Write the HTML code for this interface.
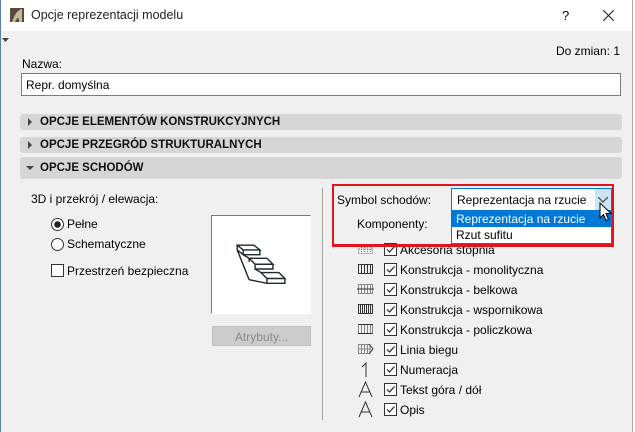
<!DOCTYPE html>
<html><head><meta charset="utf-8"><style>
*{box-sizing:border-box;margin:0;padding:0}
body{width:635px;height:432px;overflow:hidden;background:#f0f0f0;font-family:"Liberation Sans",sans-serif;font-size:12px;color:#000;position:relative}
.a{position:absolute;white-space:nowrap}
.bar{position:absolute;left:20px;width:602px;background:#d6d6d6;border-radius:3px;font-weight:bold;font-size:11.5px;color:#111}
.cb{position:absolute;width:13px;height:13px;border:1px solid #333;background:#fff}
</style></head><body>
<div class="a" style="left:0;top:0;width:635px;height:31px;background:#fff"></div>
<div class="a" style="left:0;top:0;width:1px;height:432px;background:#5b7fa8"></div>
<div class="a" style="left:632px;top:0;width:3px;height:432px;background:#fff;border-left:1px solid #aaa"></div>
<svg class="a" style="left:10px;top:8px" width="14" height="14"><rect width="14" height="14" fill="#5a4a3a"/><path d="M2 14 Q6 2 12 1 L12 14 L9 14 Q9 6 5 14Z" fill="#c8b89a"/></svg>
<div class="a" style="left:31px;top:8px;font-size:12.5px;color:#222">Opcje reprezentacji modelu</div>
<div class="a" style="left:562px;top:8px;font-size:13px">?</div>
<svg class="a" style="left:603px;top:10px" width="11" height="11"><path d="M0 0L11 11M11 0L0 11" stroke="#222" stroke-width="1.1"/></svg>
<svg class="a" style="left:2px;top:38px" width="7" height="5"><path d="M0 0H7L3.5 4Z" fill="#444"/></svg>
<div class="a" style="right:15px;top:44px">Do zmian: 1</div>
<div class="a" style="left:22px;top:57px">Nazwa:</div>
<div class="a" style="left:21px;top:73px;width:600px;height:23px;background:#fff;border:1px solid #7a7a7a;padding:4px 0 0 4px">Repr. domyślna</div>
<div class="bar" style="top:114px;height:16px;padding:2px 0 0 20px">OPCJE ELEMENTÓW KONSTRUKCYJNYCH</div>
<div class="bar" style="top:137px;height:16px;padding:2px 0 0 20px">OPCJE PRZEGRÓD STRUKTURALNYCH</div>
<div class="bar" style="top:157px;height:22px;padding:5px 0 0 20px">OPCJE SCHODÓW</div>
<svg class="a" style="left:28px;top:118px" width="5" height="8"><path d="M0 0L4 4L0 8Z" fill="#444"/></svg>
<svg class="a" style="left:28px;top:141px" width="5" height="8"><path d="M0 0L4 4L0 8Z" fill="#444"/></svg>
<svg class="a" style="left:26px;top:166px" width="8" height="5"><path d="M0 0H8L4 4Z" fill="#444"/></svg>
<div class="a" style="left:31px;top:192px">3D i przekrój / elewacja:</div>
<svg class="a" style="left:51px;top:218px" width="13" height="13"><circle cx="6.5" cy="6.5" r="6" fill="#fff" stroke="#333"/><circle cx="6.5" cy="6.5" r="3.3" fill="#222"/></svg>
<div class="a" style="left:67px;top:217px">Pełne</div>
<svg class="a" style="left:51px;top:238px" width="13" height="13"><circle cx="6.5" cy="6.5" r="6" fill="#fff" stroke="#333"/></svg>
<div class="a" style="left:67px;top:237px">Schematyczne</div>
<div class="cb" style="left:51px;top:264px"></div>
<div class="a" style="left:67px;top:264px">Przestrzeń bezpieczna</div>
<div class="a" style="left:211px;top:215px;width:100px;height:99px;background:#fff;border:1px solid #fff;border-top-color:#777;border-left-color:#777"></div>
<svg class="a" style="left:236px;top:244px" width="62" height="50" viewBox="0 0 52 42" fill="none" stroke="#1e2a30" stroke-width="1.2"><path d="M1 1H15L20 5H6Z M6 5V9H20V5 M1 1V5L6 9 M6 9L11 12H26L31 17H16L11 12 M16 17V21H31V17 M11 12V15 M1 5L11 30 M16 21L21 24H36L41 29H26L21 24 M26 29V33H41V29 M11 30L26 33"/></svg>
<div class="a" style="left:212px;top:326px;width:99px;height:20px;background:#cccccc;border:1px solid #bfbfbf;color:#8a8a8a;text-align:center;padding-top:3px">Atrybuty...</div>
<div class="a" style="left:322px;top:188px;width:1px;height:232px;background:#a0a0a0"></div>
<div class="a" style="left:337px;top:193px">Symbol schodów:</div>
<div class="a" style="left:357px;top:217px">Komponenty:</div>
<div class="a" style="left:451px;top:188px;width:161px;height:23px;background:#fff;border:1px solid #0078d7"></div>
<div class="a" style="left:457px;top:193px">Reprezentacja na rzucie</div>
<div class="a" style="left:595px;top:189px;width:16px;height:21px;background:#cce4f7"></div>
<svg class="a" style="left:598px;top:197px" width="10" height="6"><path d="M0 0L5 5L10 0" stroke="#333" fill="none"/></svg>
<div class="a" style="left:451px;top:210px;width:161px;height:34px;background:#fff;border:1px solid #0078d7"></div>
<div class="a" style="left:452px;top:211px;width:159px;height:16px;background:#0078d7;color:#fff;padding:1px 0 0 4px">Reprezentacja na rzucie</div>
<div class="a" style="left:456px;top:228px">Rzut sufitu</div>
<svg class="a" style="left:599px;top:202px" width="13" height="20"><path d="M1 1V16L4.5 12.5L7 18.5L9.5 17.5L7 11.5H12Z" fill="#fff" stroke="#000"/></svg>
<div class="a" style="left:332px;top:184px;width:282px;height:63px;border:2px solid #e0141e"></div>

<svg class="a" style="left:357px;top:242px" width="18" height="180" fill="none" stroke="#333" stroke-width="1">
<path d="M1.5 2.5H15.5V11.5H1.5Z M4.5 3V11M7.5 3V11M10.5 3V11M13.5 3V11M2 7H15" stroke="#777" stroke-dasharray="1 1"/>
<path d="M1.5 22.5H15.5V31.5H1.5Z M4.5 23V31M7.5 23V31M10.5 23V31M13.5 23V31"/>
<path d="M1.5 42.5H15.5V51.5H1.5Z M4.5 43V51M7.5 43V51M10.5 43V51M13.5 43V51" stroke="#888"/><path d="M0 47H17"/>
<path d="M1.5 62.5H15.5V71.5H1.5Z M3.5 63V71M5.5 63V71M7.5 63V71M9.5 63V71M11.5 63V71M13.5 63V71"/>
<path d="M1.5 82.5H15.5V91.5H1.5Z M4.5 83V91M7.5 83V91M10.5 83V91M13.5 83V91" stroke="#888"/><path d="M1 82.5H16M1 91.5H16"/>
<path d="M1.5 102.5H13V111.5H1.5Z M4.5 103V111M7.5 103V111M10.5 103V111 M1 107H14" stroke="#888"/><path d="M12 102L16 107L12 112"/>
<path d="M5 125L9 121V135"/>
<path d="M2 155L8.5 140L15 155M4.5 150H12.5"/>
<path d="M2 175L8.5 160L15 175M4.5 170H12.5"/>
</svg>
<div class="cb" style="left:384px;top:243px"></div><div class="a" style="left:400px;top:243px">Akcesoria stopnia</div>
<div class="cb" style="left:384px;top:263px"></div><div class="a" style="left:400px;top:263px">Konstrukcja - monolityczna</div>
<div class="cb" style="left:384px;top:283px"></div><div class="a" style="left:400px;top:283px">Konstrukcja - belkowa</div>
<div class="cb" style="left:384px;top:303px"></div><div class="a" style="left:400px;top:303px">Konstrukcja - wspornikowa</div>
<div class="cb" style="left:384px;top:323px"></div><div class="a" style="left:400px;top:323px">Konstrukcja - policzkowa</div>
<div class="cb" style="left:384px;top:343px"></div><div class="a" style="left:400px;top:343px">Linia biegu</div>
<div class="cb" style="left:384px;top:363px"></div><div class="a" style="left:400px;top:363px">Numeracja</div>
<div class="cb" style="left:384px;top:383px"></div><div class="a" style="left:400px;top:383px">Tekst góra / dół</div>
<div class="cb" style="left:384px;top:403px"></div><div class="a" style="left:400px;top:403px">Opis</div>
<svg class="a" style="left:384px;top:243px" width="13" height="173" fill="none" stroke="#222" stroke-width="1.2">
<path d="M3 6.5L5.5 9L10.5 3.5"/><path d="M3 26.5L5.5 29L10.5 23.5"/><path d="M3 46.5L5.5 49L10.5 43.5"/><path d="M3 66.5L5.5 69L10.5 63.5"/><path d="M3 86.5L5.5 89L10.5 83.5"/><path d="M3 106.5L5.5 109L10.5 103.5"/><path d="M3 126.5L5.5 129L10.5 123.5"/><path d="M3 146.5L5.5 149L10.5 143.5"/><path d="M3 166.5L5.5 169L10.5 163.5"/>
</svg>
<div class="a" style="left:332px;top:244px;width:282px;height:3px;background:#e0141e"></div>
</body></html>
